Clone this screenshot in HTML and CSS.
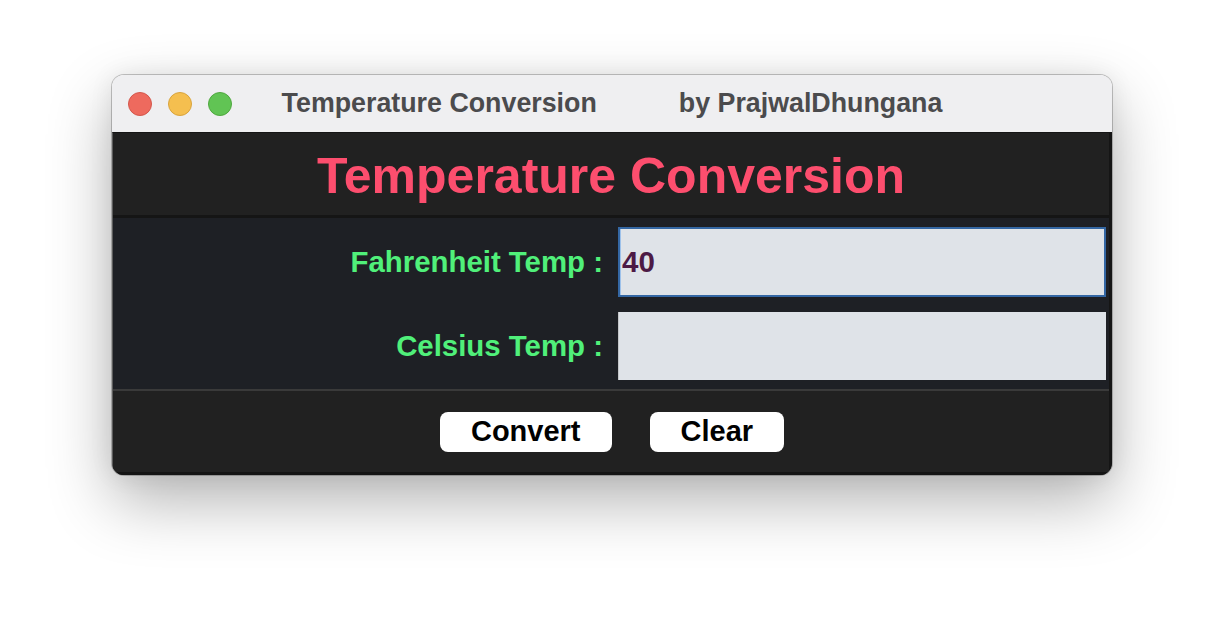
FILE: index.html
```html
<!DOCTYPE html>
<html lang="en">
<head>
<meta charset="utf-8">
<title>Temperature Conversion</title>
<link rel="stylesheet" href="styles.css">
</head>
<body>
<div class="window">
  <div class="titlebar">
    <div class="lights">
      <span class="light red"></span>
      <span class="light yellow"></span>
      <span class="light green"></span>
    </div>
    <div class="title"><span>Temperature Conversion</span><span>by PrajwalDhungana</span></div>
    <div></div>
  </div>
  <div class="content">
    <div class="header">Temperature Conversion</div>
    <div class="form">
      <label class="label" for="f">Fahrenheit Temp :</label>
      <input id="f" class="field focused" type="text" value="40">
      <label class="label" for="c">Celsius Temp :</label>
      <input id="c" class="field" type="text" value="">
    </div>
    <div class="actions">
      <button class="btn">Convert</button>
      <button class="btn">Clear</button>
    </div>
  </div>
</div>
</body>
</html>
```

FILE: styles.css
```css
html, body {
  margin: 0;
  padding: 0;
  background: #ffffff;
}
body {
  box-sizing: border-box;
  min-height: 624px;
  padding: 75px 0 0 112px;
  font-family: "Liberation Sans", Arial, sans-serif;
}
.window {
  width: 1000px;
  height: 400px;
  border-radius: 12px;
  overflow: hidden;
  display: flex;
  flex-direction: column;
  box-shadow: 0 0 0 1px rgba(0, 0, 0, 0.22), 0 26px 64px rgba(0, 0, 0, 0.30), 0 0 24px rgba(0, 0, 0, 0.08);
}
.titlebar {
  height: 57px;
  flex: none;
  background: #efeff1;
  display: grid;
  grid-template-columns: 1fr auto 1fr;
  align-items: center;
}
.lights {
  display: flex;
  gap: 16px;
  padding-left: 16px;
}
.light {
  width: 22px;
  height: 22px;
  border-radius: 50%;
  display: block;
}
.red { background: #ee6a5e; border: 1px solid #d4574c; }
.yellow { background: #f5bf4f; border: 1px solid #d9a43d; }
.green { background: #61c454; border: 1px solid #4fa83f; }
.title {
  display: flex;
  gap: 82px;
  font-size: 26.8px;
  font-weight: bold;
  color: #4b4b4d;
  white-space: nowrap;
}
.content {
  flex: 1;
  display: flex;
  flex-direction: column;
  border-left: 1px solid #5c5c5c;
  border-right: 3px solid #151515;
  border-top: 1px solid #151515;
  background: #212121;
}
.header {
  box-sizing: border-box;
  height: 85px;
  padding-top: 4px;
  display: flex;
  align-items: center;
  justify-content: center;
  font-size: 50px;
  font-weight: bold;
  color: #fd4e6e;
  background: #212121;
  border-bottom: 3px solid #151515;
}
.form {
  background: #1e2025;
  display: grid;
  grid-template-columns: 490px 488px;
  column-gap: 15px;
  row-gap: 15px;
  padding: 9px 0 9px 0;
  align-items: center;
  border-bottom: 2px solid #3a3a3a;
}
.label {
  text-align: right;
  font-size: 29.4px;
  font-weight: bold;
  color: #50f07a;
}
.field {
  box-sizing: border-box;
  width: 488px;
  height: 68px;
  margin: 0;
  padding: 0 0 0 4px;
  background: #dfe3e8;
  border: none;
  border-left: 1px solid #c4c6c9;
  outline: none;
  font-family: "Liberation Sans", Arial, sans-serif;
  font-size: 29.5px;
  font-weight: bold;
  color: #4d1a45;
}
.field.focused {
  height: 70px;
  padding-left: 2px;
  border: 2px solid #3467a4;
  box-shadow: inset 1px 0 0 #9dc1ea;
}
.actions {
  flex: 1;
  display: flex;
  justify-content: center;
  align-items: center;
  gap: 38px;
  padding-left: 2px;
  background: #212121;
  border-bottom: 3px solid #141414;
}
.btn {
  box-sizing: border-box;
  height: 40px;
  padding: 0 31px 2px;
  border: none;
  border-radius: 8px;
  background: #ffffff;
  color: #000000;
  font-family: "Liberation Sans", Arial, sans-serif;
  font-size: 29px;
  font-weight: bold;
  line-height: 36px;
}
```
